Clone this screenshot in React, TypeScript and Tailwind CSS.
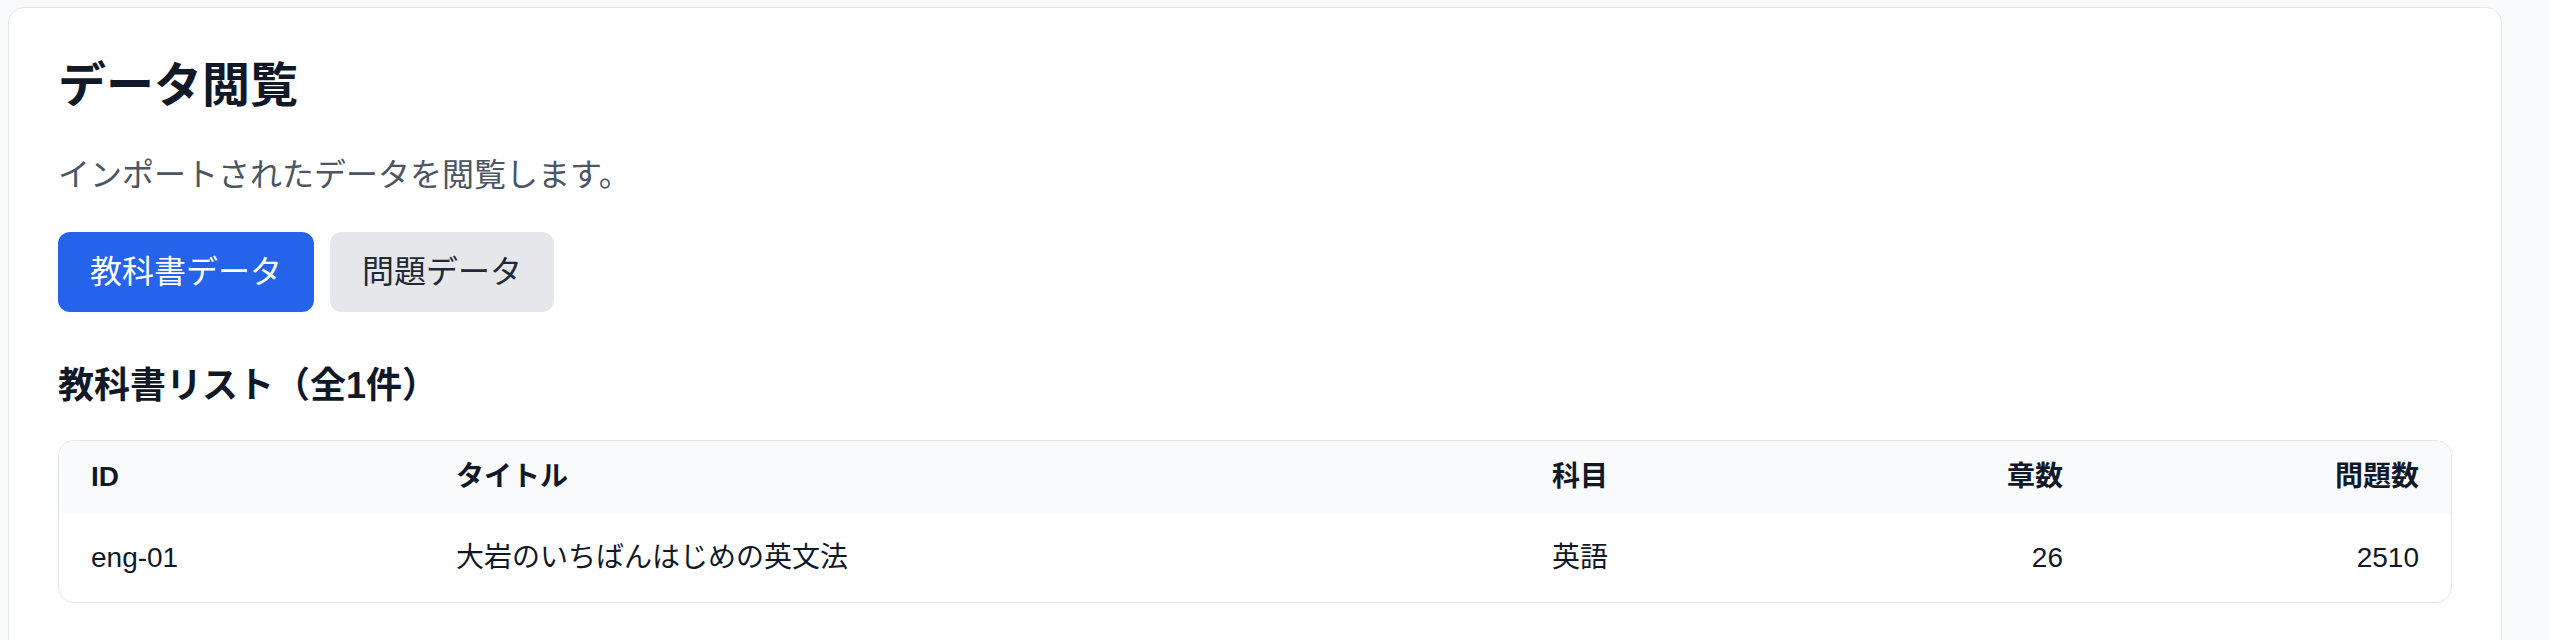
import React from 'react';

const textbooks = [
  { id: 'eng-01', title: '大岩のいちばんはじめの英文法', subject: '英語', chapters: 26, questions: 2510 },
];

export default function App() {
  return (
    <div
      className="min-h-screen bg-[#f9fafb] pl-[8px] pt-[7px] text-[#111827]"
      style={{ fontFamily: '"Liberation Sans", "Noto Sans CJK JP", sans-serif' }}
    >
      <div className="w-[2494px] bg-white border border-[#e5e7eb] rounded-[16px] px-[49px] pt-[46px] pb-[80px]">
        {/* Header */}
        <h1 className="text-[48px] leading-[64px] font-bold mb-[33px]">データ閲覧</h1>
        <p className="text-[32px] leading-[48px] text-[#4b5563] mb-[33px]">インポートされたデータを閲覧します。</p>

        {/* Tabs */}
        <div className="flex gap-[16px] mb-[46px]">
          <button className="h-[80px] px-[32px] text-[32px] leading-[48px] rounded-[12px] bg-[#2563eb] text-white">
            教科書データ
          </button>
          <button className="h-[80px] px-[32px] text-[32px] leading-[48px] rounded-[12px] bg-[#e5e7eb] text-[#1f2937]">
            問題データ
          </button>
        </div>

        {/* List */}
        <h2 className="text-[36px] leading-[56px] font-bold mb-[26px]">教科書リスト（全{textbooks.length}件）</h2>

        <div className="border border-[#e5e7eb] rounded-[16px] overflow-hidden">
          <table className="w-full table-fixed text-left text-[28px] leading-[40px]">
            <colgroup>
              <col className="w-[365px]" />
              <col className="w-[1096px]" />
              <col className="w-[287px]" />
              <col className="w-[288px]" />
              <col className="w-[356px]" />
            </colgroup>
            <thead className="bg-[#f9fafb]">
              <tr className="font-bold">
                <th className="h-[72px] px-[32px]">ID</th>
                <th className="h-[72px] px-[32px]">タイトル</th>
                <th className="h-[72px] px-[32px]">科目</th>
                <th className="h-[72px] px-[32px] text-right">章数</th>
                <th className="h-[72px] px-[32px] text-right">問題数</th>
              </tr>
            </thead>
            <tbody>
              {textbooks.map((book) => (
                <tr key={book.id}>
                  <td className="h-[89px] px-[32px]">{book.id}</td>
                  <td className="h-[89px] px-[32px]">{book.title}</td>
                  <td className="h-[89px] px-[32px]">{book.subject}</td>
                  <td className="h-[89px] px-[32px] text-right">{book.chapters}</td>
                  <td className="h-[89px] px-[32px] text-right">{book.questions}</td>
                </tr>
              ))}
            </tbody>
          </table>
        </div>
      </div>
    </div>
  );
}
